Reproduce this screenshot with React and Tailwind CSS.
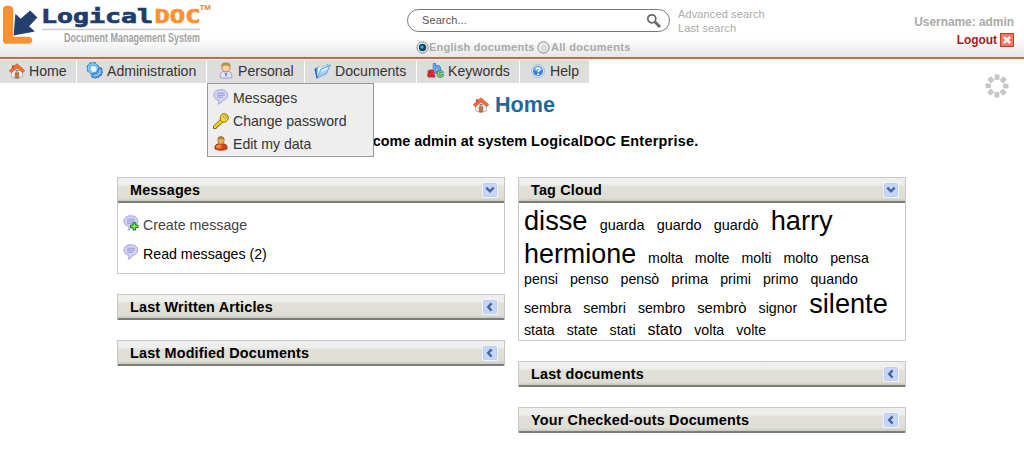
import React from "react";

function HomeIcon() {
  return (
    <svg width="16" height="16" viewBox="0 0 16 16" className="shrink-0">
      <path d="M2.6 7.5 8 3l5.4 4.5V14l-5.4 1.4L2.6 14z" fill="#ededed" stroke="#aaa39d" strokeWidth=".7" />
      <path d="M3 2.2h2.3v3L3 7z" fill="#b9532e" />
      <path d="M8 .7 15.6 7.6l-1.8 2.1L8 5 2.2 9.7.4 7.6z" fill="#ee7136" stroke="#c14a1c" strokeWidth=".7" />
      <path d="M6.2 9.6h3.6v5.5H6.2z" fill="#b87945" stroke="#8d5935" strokeWidth=".5" />
      <path d="M6.6 6.9h2.8v1.5H6.6z" fill="#68727e" />
    </svg>
  );
}

function GearIcon() {
  return (
    <svg width="17" height="17" viewBox="0 0 17 17" className="shrink-0">
      <circle cx="6.8" cy="6.2" r="4.2" fill="none" stroke="#2e7fc6" strokeWidth="3.2" />
      <circle cx="6.8" cy="6.2" r="5.5" fill="none" stroke="#2e7fc6" strokeWidth="1.6" strokeDasharray="2.4 1.92" />
      <circle cx="6.8" cy="6.2" r="4.2" fill="none" stroke="#84c8f5" strokeWidth="2" />
      <path d="M14.2 5.4 16 6.6l-.4 2.2 1 1.2-1 1.6-.2 1.6-1.8.6-.8 1.6-1.8-.4-1.4 1.2-1.4-1-1.8.4-1-2.4 2-2c2.8.2 5.4-2 5-5z" fill="#56a6e6" stroke="#2369ad" strokeWidth=".9" />
      <path d="M13.8 8c.5 3.4-1.8 5.8-5.4 5.6" fill="none" stroke="#94cff6" strokeWidth="1.2" />
      <circle cx="7.6" cy="7" r="2.9" fill="#e8eef3" />
    </svg>
  );
}

function PersonIcon() {
  return (
    <svg width="16" height="17" viewBox="0 0 16 17" className="shrink-0">
      <path d="M2 15.5c0-4 1.5-6 4-6.2h4c2.6.2 4 2.2 4 6.2-3 1-9 1-12 0z" fill="#dfe3f8" stroke="#8a94bf" strokeWidth=".8" />
      <path d="m6.4 10 1.6 1.8L9.6 10 8 15.6z" fill="#6270c9" />
      <ellipse cx="8" cy="5.6" rx="4" ry="4.1" fill="#f8d3a0" stroke="#b37a36" strokeWidth=".7" />
      <path d="M3.5 5.6C2.4 1.6 5.4.5 8 .6s5.6 1 4.5 5L11 4 7 3.6 4.8 4z" fill="#b98e48" />
    </svg>
  );
}

function BookIcon() {
  return (
    <svg width="17" height="16" viewBox="0 0 17 16" className="shrink-0">
      <path d="M.8 5.6 5 3.4l1.8.8L14 1l-3.8 9L2.8 14.6z" fill="#3f90e4" />
      <path d="m4 5 1.7-1.3 2 .8 5.4-3-3.6 9L3.2 13z" fill="#fff" stroke="#b9d7f2" strokeWidth=".6" />
      <path d="m6.6 6.4 9.6-4.6-3.6 8.6-9.6 4.9z" fill="#a4cdf8" stroke="#3f8ad8" strokeWidth=".7" />
      <path d="m7.8 7 6.6-3.3-1 2.6-6.5 3.2z" fill="#e0f0fe" />
      <path d="M1 5.6 3 15.2" stroke="#2464b6" strokeWidth="1.2" />
    </svg>
  );
}

function KeywordsIcon() {
  return (
    <svg width="17" height="17" viewBox="0 0 17 17" className="shrink-0 overflow-visible" fontFamily="Liberation Sans" fontWeight="700" paintOrder="stroke" strokeLinejoin="round">
      <text x="5.4" y="10.6" fontSize="13.5" fill="#6db2f3" stroke="#2163b8" strokeWidth="1.3">b</text>
      <text x=".6" y="15.4" fontSize="13" fill="#e22a3c" stroke="#b2152a" strokeWidth="1.2">a</text>
      <text x="9.9" y="15" fontSize="11.5" fill="#86d478" stroke="#23803a" strokeWidth="1.3">c</text>
    </svg>
  );
}

function HelpIcon() {
  return (
    <svg width="14" height="14" viewBox="0 0 14 14" className="shrink-0">
      <circle cx="7" cy="7" r="6.4" fill="#e5effa" stroke="#8caed3" strokeWidth=".8" />
      <circle cx="7" cy="7" r="5.1" fill="#3e83d2" />
      <path d="M2.3 6a4.8 4.8 0 0 1 9.4 0c-3 1.4-6.4 1.4-9.4 0z" fill="#72adeb" />
      <path d="M5.1 5.6C5.2 3.4 9 3.5 8.9 5.5 8.8 6.7 7.1 6.8 7.1 8.2" fill="none" stroke="#fff" strokeWidth="1.4" />
      <circle cx="7.1" cy="10.2" r=".9" fill="#fff" />
    </svg>
  );
}

function MessageIcon({ add = false }) {
  return (
    <svg width="16" height="16" viewBox="0 0 16 16" className="shrink-0">
      <path d="M7.7.8C3.5.8 1 2.8 1 6c0 3 2 4.9 4.8 5.3.2 1.8-.1 2.9-.9 3.9 2.3-.5 3.9-1.9 4.8-3.9 3.1-.5 5-2.4 5-5.3C14.7 2.8 12 .8 7.7.8z" fill="#d3d5fb" stroke="#9a9bcd" strokeWidth=".9" />
      <path d="M4 4.2h7.8M4 6.2h7.8M4 8.2h6" stroke="#8d8fcb" strokeWidth=".9" />
      {add && <path d="M10 7.7h2.6V10H15v2.6h-2.4V15H10v-2.4H7.6V10H10z" fill="#7be94c" stroke="#16780f" strokeWidth="1" />}
    </svg>
  );
}

function KeyIcon() {
  return (
    <svg width="16" height="16" viewBox="0 0 16 16" className="shrink-0">
      <path d="M7.6 6.4.5 13v2.5h2.8l.4-1.5 1.5-.3.3-1.6 1.6-.3L10.2 9z" fill="#f4cf20" stroke="#7a5f0a" strokeWidth=".9" />
      <path d="M8.6 1.7C10 .2 12.4.2 14 1.7c1.7 1.6 1.8 4.1.3 5.7-1.7 1.9-4.3 2.6-6 1-1.8-1.7-1.4-4.9.3-6.7z" fill="#fbdc2c" stroke="#8a6b0b" strokeWidth="1" />
      <ellipse cx="12" cy="3.8" rx="1.6" ry="1.1" fill="#fff" stroke="#80680e" strokeWidth=".7" transform="rotate(45 12 3.8)" />
    </svg>
  );
}

function UserIcon() {
  return (
    <svg width="16" height="16" viewBox="0 0 16 16" className="shrink-0">
      <path d="M1.9 12.8c-.2-3.6 1.4-4.8 3.8-5h4.6c2.6.2 4 1.4 3.8 5-2 1.9-10.2 1.9-12.2 0z" fill="#d2481c" stroke="#97290f" strokeWidth=".8" />
      <path d="M3 11.4c0-2.2 1-2.6 3-2.8l3 1-2 3z" fill="#f08a46" />
      <ellipse cx="8" cy="4.4" rx="3.2" ry="3.8" fill="#eab055" stroke="#a06a22" strokeWidth=".7" />
      <path d="M4.7 3.8C4.2 1 6.5.3 8 .4s3.8.7 3.3 3.4L8 2.4z" fill="#ab7a2c" />
    </svg>
  );
}

function Spinner() {
  return (
    <svg width="24" height="24" viewBox="0 0 24 24">
      {[0, 45, 90, 135, 180, 225, 270, 315].map((a) => (
        <rect key={a} x="9.7" y=".5" width="4.8" height="5.4" rx=".8" fill="#c6c6c6" transform={`rotate(${a} 12 12)`} />
      ))}
    </svg>
  );
}

function Logo() {
  return (
    <svg width="240" height="48" viewBox="0 0 240 48" className="shrink-0">
      <path d="M6.4 5.8h3.2c2 0 3.4 1.4 3.4 3.4v27.6h15.7c2 0 3.5 1.5 3.5 3.5s-1.5 3.5-3.5 3.5H6.4c-2 0-3.4-1.4-3.4-3.4V9.2c0-2 1.4-3.4 3.4-3.4z" fill="#fa9234" />
      <path d="m13.6 35.6 1.8-21.8 5.2 4.9 9.6-8.2 7.2 7-8.3 8.7 5.8 5.4z" fill="#233f70" />
      <text x="41" y="22.7" textLength="112" lengthAdjust="spacingAndGlyphs" fontFamily="DejaVu Sans Mono" fontWeight="700" fontSize="20" fill="#203c6b" stroke="#203c6b" strokeWidth=".7">Logical</text>
      <text x="154.5" y="22.7" textLength="46" lengthAdjust="spacingAndGlyphs" fontFamily="DejaVu Sans Mono" fontWeight="700" fontSize="20" fill="#fa9234" stroke="#fa9234" strokeWidth=".7">DOC</text>
      <text x="199.5" y="10" textLength="11.5" lengthAdjust="spacingAndGlyphs" fontFamily="Liberation Sans" fontWeight="700" fontSize="7.2" fill="#dd8849">TM</text>
      <path d="M42 29.5h158" stroke="#cccccc" strokeWidth="1.5" />
      <g transform="translate(64 42) scale(.8 1)">
        <text textLength="170" lengthAdjust="spacingAndGlyphs" fontFamily="Liberation Sans" fontWeight="700" fontSize="12" fill="#a3a3a3">Document Management System</text>
      </g>
    </svg>
  );
}

function Radio({ checked = false }) {
  return (
    <svg width="13" height="13" viewBox="0 0 13 13" className="shrink-0">
      <circle cx="6.5" cy="6.5" r="5.6" fill="#f4f4f4" stroke="#848484" />
      <circle cx="7" cy="7" r="3.8" fill="#dcdcdc" />
      {checked && <circle cx="6.5" cy="6.5" r="3.7" fill="#0c4464" />}
      {checked && <circle cx="6" cy="6" r="1.6" fill="#48b5dc" />}
    </svg>
  );
}

function MenuItem({ icon, label, width }) {
  return (
    <div className={`flex h-[23px] items-center bg-[#dddddd] pl-[9px] ${width}`}>
      <div className="mb-[2px] flex w-5 shrink-0 items-center">{icon}</div>
      <span className="whitespace-nowrap leading-[23px]">{label}</span>
    </div>
  );
}

function Panel({ title, open = false, height = "", children }) {
  return (
    <section className={`flex flex-col border-x border-t border-[#c8c8c8] bg-white ${open ? "border-b" : ""} ${height}`}>
      <div className="flex h-[25px] shrink-0 items-center justify-between border-b-2 border-[#7d7d78] bg-[linear-gradient(#efefef_0px,#ededeb_7px,#e1e1da_8px,#deded5_20px,#c9c9c2_23px)] pl-3 pr-[6px]">
        <h2 className="text-[14.4px] font-bold leading-6 tracking-[0.18px]">{title}</h2>
        <svg width="16" height="16" viewBox="0 0 16 16">
          <rect width="16" height="16" rx="2" fill="#f6f9ff" />
          <rect x="1.4" y="1.4" width="13.2" height="13.2" rx="1" fill="#c5d6f7" stroke="#a9c0ec" strokeWidth=".7" />
          <path d={open ? "m4.3 5.7 3.7 3.7 3.7-3.7" : "M9.6 4.4 6.2 8l3.4 3.6"} fill="none" stroke="#46669c" strokeWidth="2.4" />
        </svg>
      </div>
      {children}
    </section>
  );
}

const cloud = [
  { height: "h-[36px] gap-[12.2px] leading-[36px]", words: ["disse", "guarda", "guardo", "guardò", "harry"] },
  { height: "h-[30px] gap-[12px] leading-[31px]", words: ["hermione", "molta", "molte", "molti", "molto", "pensa"] },
  { height: "h-[20px] gap-[12px] leading-[20px]", words: ["pensi", "penso", "pensò", "prima", "primi", "primo", "quando"] },
  { height: "h-[30px] gap-[12px] leading-[29px]", words: ["sembra", "sembri", "sembro", "sembrò", "signor", "silente"] },
  { height: "h-[21px] gap-[12px] leading-[22px]", words: ["stata", "state", "stati", "stato", "volta", "volte"] },
];
const sizes = {
  disse: "text-[27.2px]",
  harry: "text-[27.2px]",
  hermione: "text-[26.9px]",
  silente: "text-[27.2px]",
  stato: "text-[16px]",
  guarda: "text-[14.4px]",
  guardo: "text-[14.4px]",
  "guardò": "text-[14.4px]",
  prima: "text-[14.8px]",
  "sembrò": "text-[14.8px]",
};

export default function App() {
  return (
    <div className="h-[463px] w-[1024px] overflow-hidden bg-white font-['Liberation_Sans',Arial,sans-serif] text-[14.4px] text-black">
      <header className="flex h-[59px] border-b-2 border-[#c66a49] bg-[linear-gradient(#fff_0px,#fff_38px,#e7e7e7_56px,#f8ded2_57px)]">
        <Logo />
        <div className="ml-[167px] w-[263px] shrink-0 pt-[9px]">
          <div className="flex h-[23px] items-center justify-between rounded-full border border-[#777] bg-white pl-[14px] pr-[7px] text-[11px] text-[#555]">
            <span className="tracking-[0.1px]">Search...</span>
            <svg width="16" height="16" viewBox="0 0 16 16" fill="none" stroke="#666">
              <circle cx="5.8" cy="5.8" r="4" strokeWidth="1.7" />
              <path d="m9 9 5 5" strokeWidth="2.8" />
            </svg>
          </div>
          <div className="ml-[9px] mt-2 flex items-center whitespace-nowrap text-[11px] font-bold leading-[14px] text-[#a9a9a9]">
            <Radio checked />
            <span className="w-[108px] tracking-[0.25px]">English documents</span>
            <Radio />
            <span className="ml-[1px] tracking-[0.3px]">All documents</span>
          </div>
        </div>
        <div className="ml-[8px] pt-[7px] text-[11px] leading-[14px] tracking-[0.12px] text-[#aaa]">
          <div>Advanced search</div>
          <div>Last search</div>
        </div>
        <div className="ml-auto flex flex-col items-end pr-[10px] pt-[13px] text-[11.9px] font-bold leading-[18px]">
          <span className="text-[#aaa]">Username: admin</span>
          <span className="flex items-center gap-[3px] text-[#a01923]">
            Logout
            <svg width="14" height="14" viewBox="0 0 14 14">
              <rect x=".5" y=".5" width="13" height="13" fill="#ee7862" stroke="#ba3c32" />
              <path d="m3.8 3.8 6.4 6.4m0-6.4-6.4 6.4" stroke="#fff3ef" strokeWidth="2.6" />
            </svg>
          </span>
        </div>
      </header>

      <div className="flex justify-between pt-[1px]">
        <nav className="flex gap-px text-[14.1px] text-[#333]">
          <MenuItem icon={<HomeIcon />} label="Home" width="w-[76px]" />
          <MenuItem icon={<GearIcon />} label={<span className="ml-[1px]">Administration</span>} width="w-[129px]" />
          <div className="relative">
            <MenuItem icon={<span className="ml-[2px]"><PersonIcon /></span>} label={<span className="ml-[2px]">Personal</span>} width="w-[97px]" />
            <div className="absolute left-0 top-[23px] z-10 flex h-[74px] w-[167px] flex-col border border-[#999] bg-[#eee] pl-[5px] pt-[3px]">
              <div className="flex h-[23px] items-center gap-1"><span className="mb-[3px]"><MessageIcon /></span>Messages</div>
              <div className="flex h-[23px] items-center gap-1"><span className="mb-[2px]"><KeyIcon /></span>Change password</div>
              <div className="flex h-[23px] items-center gap-1"><span className="mb-[2px]"><UserIcon /></span>Edit my data</div>
            </div>
          </div>
          <MenuItem icon={<BookIcon />} label={<span className="ml-[1px]">Documents</span>} width="w-[111px]" />
          <MenuItem icon={<span className="ml-[1px]"><KeywordsIcon /></span>} label={<span className="ml-[2px]">Keywords</span>} width="w-[102px]" />
          <MenuItem icon={<span className="ml-[2px]"><HelpIcon /></span>} label={<span className="ml-[1px]">Help</span>} width="w-[69px]" />
        </nav>
        <div className="h-[23px] pr-[15px] pt-[14px]"><Spinner /></div>
      </div>

      <div className="mt-[9px] flex h-[26px] items-center justify-center gap-[6px] pl-[4px]">
        <HomeIcon />
        <h1 className="text-[21.6px] font-bold leading-[26px] text-[#1f689d]">Home</h1>
      </div>
      <p className="mt-[14px] pl-[22px] text-center text-[14.4px] font-bold leading-[18px]">
        Welcome admin at system <span className="tracking-[0.27px]">LogicalDOC Enterprise.</span>
      </p>

      <main className="mt-[27px] flex items-start gap-[13px] pl-[117px]">
        <div className="flex w-[388px] flex-col gap-5">
          <Panel title="Messages" open height="h-[97px]">
            <div className="flex flex-col pl-[5px] pt-[8px] text-[14.2px]">
              <div className="flex h-[29px] items-center gap-1 text-[#444]"><span className="mb-[6px]"><MessageIcon add /></span>Create message</div>
              <div className="flex h-[29px] items-center gap-1"><span className="mb-[6px]"><MessageIcon /></span>Read messages (2)</div>
            </div>
          </Panel>
          <Panel title="Last Written Articles" />
          <Panel title="Last Modified Documents" />
        </div>
        <div className="flex w-[388px] flex-col gap-5">
          <Panel title="Tag Cloud" open height="h-[164px]">
            <div className="flex flex-col pl-[5px]">
              {cloud.map((row) => (
                <div key={row.words[0]} className={`flex items-baseline whitespace-nowrap ${row.height}`}>
                  {row.words.map((word) => (
                    <span key={word} className={sizes[word] || "text-[14.2px]"}>{word}</span>
                  ))}
                </div>
              ))}
            </div>
          </Panel>
          <Panel title="Last documents" />
          <Panel title="Your Checked-outs Documents" />
        </div>
      </main>
    </div>
  );
}
